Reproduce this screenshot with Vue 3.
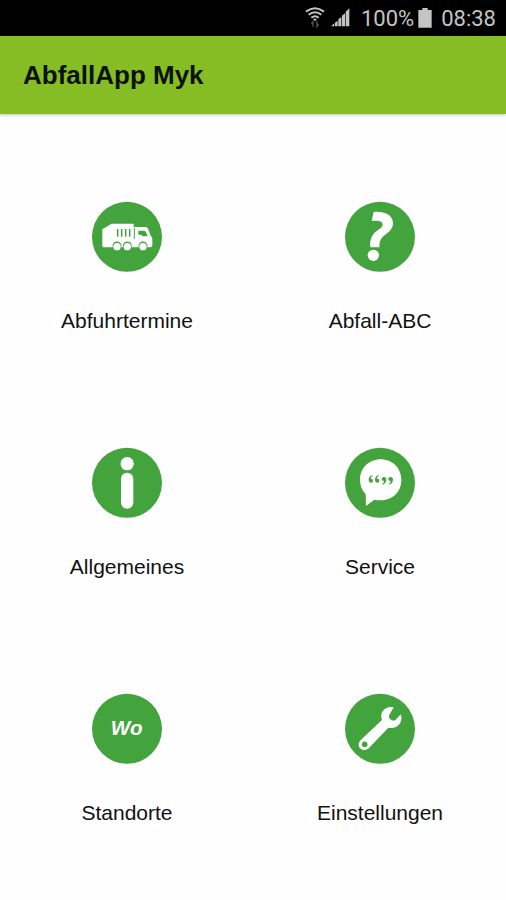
<script setup>
const tiles = [
  { id: 'truck', label: 'Abfuhrtermine' },
  { id: 'question', label: 'Abfall-ABC' },
  { id: 'info', label: 'Allgemeines' },
  { id: 'chat', label: 'Service' },
  { id: 'wo', label: 'Standorte' },
  { id: 'wrench', label: 'Einstellungen' },
]
</script>

<template>
  <div class="screen">
    <div class="status">
      <svg class="wifi" viewBox="0 0 60 66" fill="none" stroke="#c4c4c4">
        <path d="M3 14Q30-6 57 14" stroke-width="6" />
        <path d="M11 23Q30 8 49 23" stroke-width="6" />
        <path d="M19 32Q30 23 41 32" stroke-width="6" />
        <path d="M24 35h12l-6 8z" fill="#c4c4c4" stroke="none" />
        <path d="M24 59V44l-5 6M36 43v15l5-6" stroke="#555" stroke-width="4" />
      </svg>
      <svg class="signal" viewBox="0 0 57 57" fill="#c4c4c4">
        <path d="M0 55L10 46V55zM12 44l8-6v17h-8zM22 34l9-7v28h-9zM33 23l9-7v39h-9zM44 11l11-10v54H44z" />
      </svg>
      <span class="percent">100%</span>
      <svg class="battery" viewBox="0 0 42 60" fill="#c4c4c4">
        <path d="M13 0h16v6h12v53H1V6h12z" />
      </svg>
      <span class="clock">08:38</span>
    </div>
    <header class="bar"><h1>AbfallApp Myk</h1></header>
    <main class="grid">
      <button v-for="t in tiles" :key="t.id" class="tile">
        <svg class="icon" viewBox="0 0 252 252">
          <circle cx="126" cy="125.500" r="105" fill="#43a33d" />
          <g v-if="t.id === 'truck'">
            <path d="M52 103L80 86H146V96H181Q187 96 190 103L197 122Q202 125 202 133V151Q202 157 196 157H57Q52 157 52 152z" fill="#fff" />
            <path d="M98 102v23M110 102v23M122 102v23M134 102v23" stroke="#43a33d" stroke-width="4.500" />
            <path d="M148 98v33" stroke="#43a33d" stroke-width="3" />
            <path d="M160 107h17q4 0 6 5l5 12h-15l-4-5h-9z" fill="#43a33d" />
            <g fill="#43a33d">
              <circle cx="96" cy="153" r="13.500" />
              <circle cx="127" cy="153" r="13.500" />
              <circle cx="174" cy="153" r="13.500" />
            </g>
            <g fill="#fff">
              <circle cx="96" cy="155" r="11" />
              <circle cx="127" cy="155" r="11" />
              <circle cx="174" cy="155" r="11" />
            </g>
          </g>
          <g v-else-if="t.id === 'question'" fill="#fff">
            <path d="M107 51C137 48 164 59 165 84C166 103 149 113 136 124C126 133 124 144 124 157H97C95 136 100 121 115 109C127 100 135 96 134 88C133 77 119 76 101 78z" />
            <circle cx="106" cy="181" r="17" />
          </g>
          <g v-else-if="t.id === 'info'" fill="#fff">
            <circle cx="126.500" cy="68" r="20" />
            <rect x="108" y="95" width="37" height="108" rx="18" />
          </g>
          <g v-else-if="t.id === 'chat'">
            <path d="M128 55C163 55 190 81 190 117C190 153 163 178 128 178C121 178 114 177 109 176L84 195L83 160C72 149 66 134 66 117C66 81 93 55 128 55z" fill="#fff" />
            <g fill="#43a33d">
              <path d="M103 102C96 104 92 109 92 116C92 122 95 125 99 125C103 125 105 122 105 119C105 115 102 113 98 113C98 109 100 107 103 105z" />
              <path d="M122 102C115 104 111 109 111 116C111 122 114 125 118 125C122 125 124 122 124 119C124 115 121 113 117 113C117 109 119 107 122 105z" />
              <path d="M133 131C140 129 145 123 145 116C145 111 142 108 138 108C134 108 131 111 131 114C131 118 134 120 138 120C138 124 136 126 133 128z" />
              <path d="M153 131C160 129 165 123 165 116C165 111 162 108 158 108C154 108 151 111 151 114C151 118 154 120 158 120C158 124 156 126 153 128z" />
            </g>
          </g>
          <text v-else-if="t.id === 'wo'" class="wo" x="125" y="143" text-anchor="middle" textLength="95" lengthAdjust="spacingAndGlyphs">Wo</text>
          <g v-else>
            <path d="M167 61C150 57 134 66 130 82C129 88 130 94 132 99L69 158C59 167 61 179 68 185C76 192 88 190 95 181L151 122C166 125 180 120 187 107C191 99 192 89 188 82L173 98C168 103 160 100 156 96C152 91 152 85 156 80z" fill="#fff" />
            <circle cx="80" cy="172" r="8.500" fill="#43a33d" />
          </g>
        </svg>
        <span class="label">{{ t.label }}</span>
      </button>
    </main>
  </div>
</template>

<style>
body {
  margin: 0;
  background: #fff;
}
</style>

<style scoped>
.screen {
  height: 900px;
  display: flex;
  flex-direction: column;
  overflow: hidden;
  background: #fefefe;
  font-family: "Liberation Sans", Arial, sans-serif;
}
.status {
  height: 35.5px;
  box-sizing: border-box;
  padding: 0 10px 0 0;
  display: flex;
  align-items: center;
  justify-content: flex-end;
  background: #000;
  color: #c4c4c4;
  font: 22px/38px Roboto, sans-serif;
}
.status span {
  padding-top: 2px;
}
.wifi {
  width: 20px;
  height: 22px;
  margin-right: 6px;
}
.signal {
  width: 19px;
  height: 19px;
  margin-right: 11px;
}
.battery {
  width: 14px;
  height: 20px;
  margin: 0 9px 0 4px;
}
.bar {
  height: 78px;
  flex: none;
  display: flex;
  align-items: center;
  padding-left: 23px;
  background: #86bd25;
  box-shadow: 0 1px 3px rgba(0, 0, 0, 0.25);
}
h1 {
  margin: 0;
  font-size: 26px;
  line-height: 30px;
  color: #0b1203;
}
.grid {
  display: grid;
  grid-template-columns: 1fr 1fr;
  grid-auto-rows: 246px;
}
.tile {
  display: flex;
  flex-direction: column;
  align-items: center;
  justify-content: flex-start;
  gap: 30px;
  padding: 81px 0 0;
  border: 0;
  background: none;
  font-family: inherit;
}
.icon {
  width: 84px;
  height: 84px;
  flex: none;
}
.wo {
  fill: #fff;
  font: italic bold 63px "Liberation Sans", Arial, sans-serif;
}
.label {
  padding-left: 1px;
  font-size: 21px;
  line-height: 24px;
  color: #111;
}
</style>
